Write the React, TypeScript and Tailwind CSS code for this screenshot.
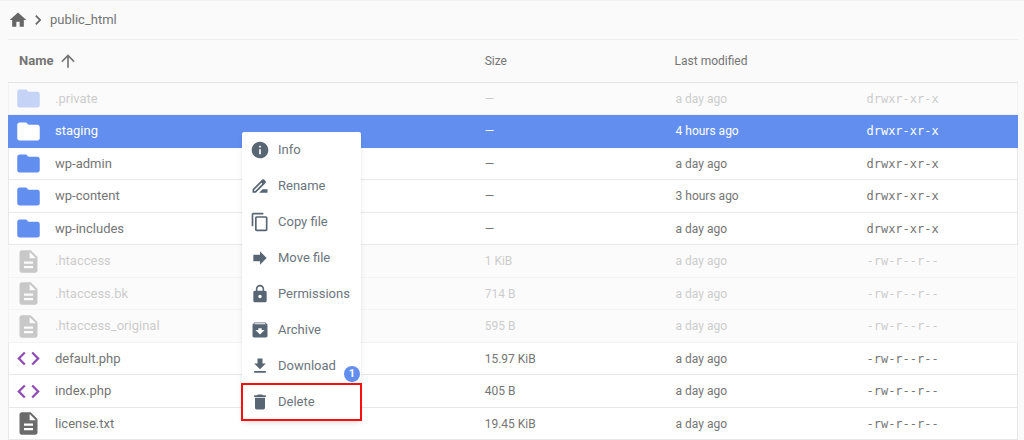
import { useState } from 'react';
import type { IconType } from 'react-icons';
import {
  MdArchive,
  MdArrowUpward,
  MdChevronRight,
  MdCode,
  MdContentCopy,
  MdDelete,
  MdDescription,
  MdDriveFileRenameOutline,
  MdFileDownload,
  MdFolder,
  MdForward,
  MdHome,
  MdInfo,
  MdLock,
} from 'react-icons/md';
import clsx from 'clsx';

type Kind = 'folder' | 'code' | 'text';

interface Entry {
  name: string;
  kind: Kind;
  size: string;
  modified: string;
  mode: string;
}

const ENTRIES: Entry[] = [
  { name: '.private',           kind: 'folder', size: '—',         modified: 'a day ago',   mode: 'drwxr-xr-x' },
  { name: 'staging',            kind: 'folder', size: '—',         modified: '4 hours ago', mode: 'drwxr-xr-x' },
  { name: 'wp-admin',           kind: 'folder', size: '—',         modified: 'a day ago',   mode: 'drwxr-xr-x' },
  { name: 'wp-content',         kind: 'folder', size: '—',         modified: '3 hours ago', mode: 'drwxr-xr-x' },
  { name: 'wp-includes',        kind: 'folder', size: '—',         modified: 'a day ago',   mode: 'drwxr-xr-x' },
  { name: '.htaccess',          kind: 'text',   size: '1 KiB',     modified: 'a day ago',   mode: '-rw-r--r--' },
  { name: '.htaccess.bk',       kind: 'text',   size: '714 B',     modified: 'a day ago',   mode: '-rw-r--r--' },
  { name: '.htaccess_original', kind: 'text',   size: '595 B',     modified: 'a day ago',   mode: '-rw-r--r--' },
  { name: 'default.php',        kind: 'code',   size: '15.97 KiB', modified: 'a day ago',   mode: '-rw-r--r--' },
  { name: 'index.php',          kind: 'code',   size: '405 B',     modified: 'a day ago',   mode: '-rw-r--r--' },
  { name: 'license.txt',        kind: 'text',   size: '19.45 KiB', modified: 'a day ago',   mode: '-rw-r--r--' },
];

const KIND_ICONS: Record<Kind, { Icon: IconType; color: string }> = {
  folder: { Icon: MdFolder,      color: 'text-[#628eef]' },
  code:   { Icon: MdCode,        color: 'text-[#8e4bb5]' },
  text:   { Icon: MdDescription, color: 'text-[#6b6b6b]' },
};

const ACTIONS: { label: string; Icon: IconType }[] = [
  { label: 'Info',        Icon: MdInfo },
  { label: 'Rename',      Icon: MdDriveFileRenameOutline },
  { label: 'Copy file',   Icon: MdContentCopy },
  { label: 'Move file',   Icon: MdForward },
  { label: 'Permissions', Icon: MdLock },
  { label: 'Archive',     Icon: MdArchive },
  { label: 'Download',    Icon: MdFileDownload },
  { label: 'Delete',      Icon: MdDelete },
];

function Breadcrumb() {
  return (
    <nav aria-label="Breadcrumb" className="flex h-[39px] items-center border-b border-[#eeeeee] text-[13px]">
      <a href="#home" aria-label="Home" className="text-[#666666]">
        <MdHome size={20} />
      </a>
      <MdChevronRight size={20} className="text-[#666666]" stroke="currentColor" />
      <a href="#public_html" className="ml-0.5">public_html</a>
    </nav>
  );
}

function FileRow({ entry, selected, onSelect }: { entry: Entry; selected: boolean; onSelect: () => void }) {
  const { Icon, color } = KIND_ICONS[entry.kind];
  const hidden = entry.name.startsWith('.');
  const cell = clsx('border-b p-0', selected ? 'border-[#628eef]' : hidden ? 'border-[#f3f3f3]' : 'border-[#e8e8e8]');
  const fade = hidden && 'opacity-35';

  return (
    <tr
      onClick={onSelect}
      aria-selected={selected}
      className={clsx(
        'h-8 even:h-[33px]',
        selected ? 'bg-[#628eef] text-white' : hidden ? 'bg-[#fbfbfb]' : 'bg-white',
      )}
    >
      <td className={clsx(cell, 'border-l pl-1.5')}>
        <div className={clsx('flex items-center gap-[13px]', fade)}>
          <Icon size={27} className={selected ? 'text-white' : color} />
          <span className="text-[13px] leading-5">{entry.name}</span>
        </div>
      </td>
      <td className={clsx(cell, 'pl-0.5')}>
        <div className={clsx(fade)}>{entry.size}</div>
      </td>
      <td className={clsx(cell, 'pl-px')}>
        <div className={clsx(fade)}>{entry.modified}</div>
      </td>
      <td className={clsx(cell, 'border-r')}>
        <div className={clsx("font-['DejaVu_Sans_Mono',monospace]", fade)}>{entry.mode}</div>
      </td>
    </tr>
  );
}

function ContextMenu() {
  return (
    <div role="menu" className="absolute top-[131px] left-[242px] w-[119px] rounded-xs bg-white text-[13px] text-[#6c757d] shadow-md">
      {ACTIONS.map(({ label, Icon }) => (
        <button
          key={label}
          type="button"
          role="menuitem"
          className={clsx(
            'flex h-9 w-full items-center gap-2 pl-2',
            label === 'Delete' && 'outline-2 -outline-offset-1 outline-[#fa0f0f]',
          )}
        >
          <Icon size={20} className="text-[#586673]" />
          {label}
        </button>
      ))}
      <span className="absolute right-px bottom-[38px] flex size-4 items-center justify-center rounded-full bg-[#628eef] text-[11px] font-bold text-white">
        1
      </span>
    </div>
  );
}

export default function App() {
  const [selected, setSelected] = useState('staging');

  return (
    <main className="relative min-h-screen border-t border-[#f0f0f0] bg-[#fafafa] pr-1.5 pl-2 font-[Roboto,sans-serif] text-[#757575]">
      <Breadcrumb />
      <table className="w-full table-fixed border-separate border-spacing-0 text-left text-xs">
        <thead>
          <tr className="h-[43px]">
            <th className="w-[47%] border-b border-[#e4e4e4] p-0 pl-[11px] text-[13px] font-bold">
              <button type="button" className="flex items-center gap-[5px]">
                Name
                <MdArrowUpward size={20} />
              </button>
            </th>
            <th className="w-[19%] border-b border-[#e4e4e4] p-0 pl-0.5 font-normal">Size</th>
            <th className="w-[19%] border-b border-[#e4e4e4] p-0 font-normal">Last modified</th>
            <th aria-label="Permissions" className="border-b border-[#e4e4e4] p-0" />
          </tr>
        </thead>
        <tbody>
          {ENTRIES.map((entry) => (
            <FileRow
              key={entry.name}
              entry={entry}
              selected={entry.name === selected}
              onSelect={() => setSelected(entry.name)}
            />
          ))}
        </tbody>
      </table>
      <ContextMenu />
    </main>
  );
}
